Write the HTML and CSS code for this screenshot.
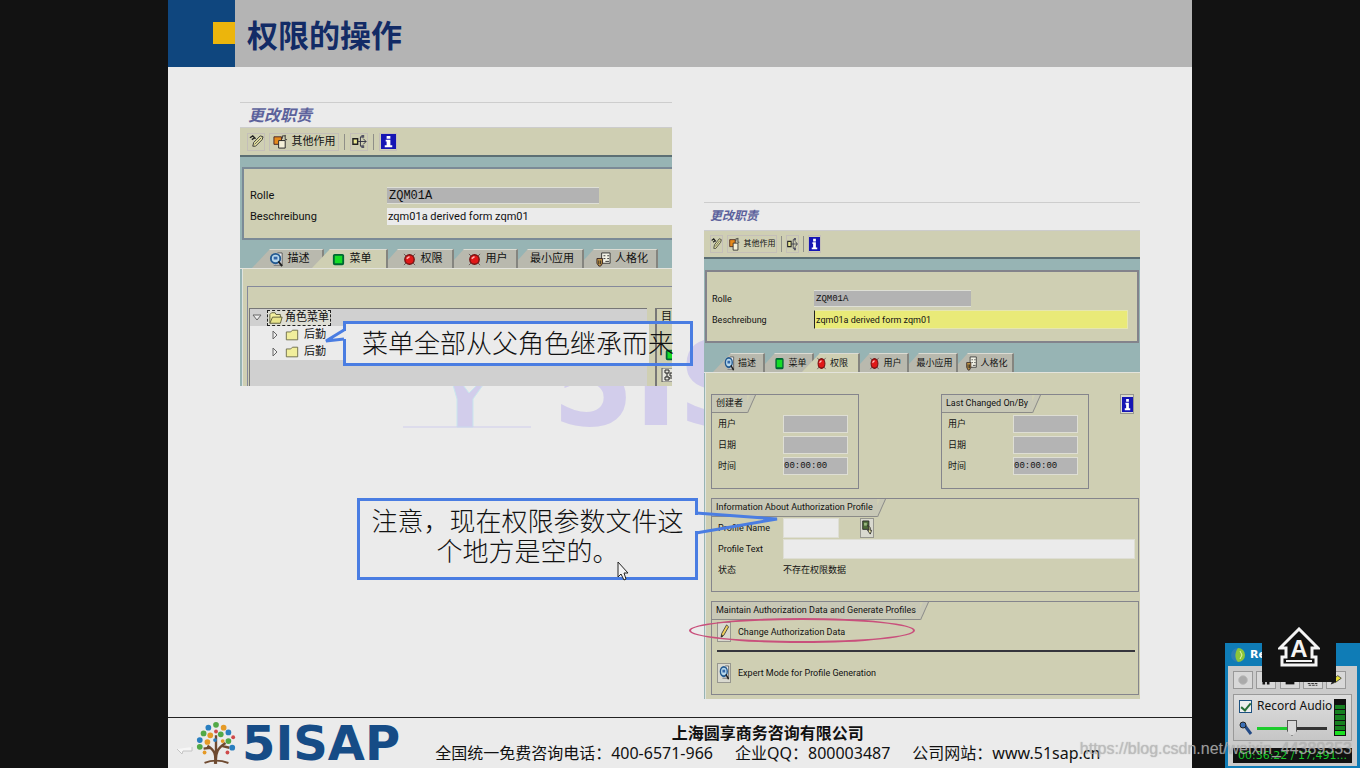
FILE: index.html
```html
<!DOCTYPE html>
<html lang="zh-CN">
<head>
<meta charset="utf-8">
<title>权限的操作</title>
<link rel="stylesheet" href="styles.css">
</head>
<body>
<svg class="symbols" aria-hidden="true">
  <symbol id="i-edit" viewBox="0 0 16 16" preserveAspectRatio="none"><path d="M1 4l3-2 3 3M3 6l3-2" fill="none" stroke="#222" stroke-width="1.5"/><path d="M4 13l1-4 7-7 3 1-1 3-7 7z" fill="#e9e6a0" stroke="#333"/><path d="M6 11l7-7" stroke="#555"/></symbol>
  <symbol id="i-other" viewBox="0 0 16 16" preserveAspectRatio="none"><path d="M1 3h8v8H1z" fill="#e58a1c" stroke="#422"/><path d="M6 7h7v8H6z" fill="#f4f0d8" stroke="#222"/><path d="M10 5V2h3M13 1v5h2" fill="none" stroke="#333"/></symbol>
  <symbol id="i-tree" viewBox="0 0 16 16" preserveAspectRatio="none"><path d="M1 5h5v6H1z" fill="#e8e690" stroke="#222" stroke-width="1.5"/><path d="M6 8h9M9 8V3h2M9 8v5h2M12 5l3 3-3 3" fill="none" stroke="#334"/><path d="M10 1h3v3h-3zM10 12h3v3h-3z" fill="#556"/></symbol>
  <symbol id="i-info" viewBox="0 0 16 16" preserveAspectRatio="none"><path d="M0 0h16v16H0z" fill="#1515b4"/><path d="M6 2h4v3H6zM5 6h5v6h2v2H4v-2h2V8H5z" fill="#fff"/></symbol>
  <symbol id="i-search" viewBox="0 0 16 16" preserveAspectRatio="none"><path d="M9 1h5v13H5" fill="#eee" stroke="#555"/><circle cx="7" cy="7" r="5" fill="#b8d8ec" stroke="#235a91" stroke-width="2"/><path d="M5 5h4v3H5z" fill="#3567a8"/><path d="M10 10l4 5" stroke="#222" stroke-width="2"/></symbol>
  <symbol id="i-green" viewBox="0 0 16 16" preserveAspectRatio="none"><rect x="3" y="3" width="10" height="10" rx="1" fill="#16dc28" stroke="#063" stroke-width="2"/></symbol>
  <symbol id="i-red" viewBox="0 0 16 16" preserveAspectRatio="none"><path d="M2 2l12 12M14 2L2 14" stroke="#655"/><circle cx="8" cy="8" r="5" fill="#e01818" stroke="#711" stroke-width="1.5"/><path d="M5 7l3-2" stroke="#fbb" stroke-width="1.5"/></symbol>
  <symbol id="i-person" viewBox="0 0 16 16" preserveAspectRatio="none"><path d="M6 1h9v11H6z" fill="#f2f2e6" stroke="#333"/><path d="M8 4h2M12 4h2M8 7h2M12 7h2M10 10h4" stroke="#333"/><path d="M1 7h6v5l-2 3H3l-2-3z" fill="#c79a48" stroke="#322"/><path d="M3 9v4M5 9v4" stroke="#222"/></symbol>
  <symbol id="i-open" viewBox="0 0 16 16"><path d="M1 14V4l2-2h4l1 2h5v3" fill="#f4f1a0" stroke="#553"/><path d="M1 14l3-7h11l-2 7z" fill="#e9e58b" stroke="#553"/></symbol>
  <symbol id="i-folder" viewBox="0 0 16 16"><path d="M1.500 4.500h5l2-2h6v11h-13z" fill="#f1ee9c" stroke="#664"/></symbol>
  <symbol id="i-pencil" viewBox="0 0 16 16" preserveAspectRatio="none"><path d="M3 14l1-4 7-9 3 2-7 9z" fill="#f2cf5b" stroke="#333"/><path d="M3 14l1-3 2 2z" fill="#222"/></symbol>
  <symbol id="i-copy" viewBox="0 0 16 16" preserveAspectRatio="none"><path d="M1 1h9v9H1z" fill="#4d6b38" stroke="#222"/><path d="M3 3h4v3H3z" fill="#9bb883"/><path d="M8 6l4 2v3h2l-2 4-4-4h2V9z" fill="#e8e3a0" stroke="#222"/></symbol>
</svg>

<main class="slide">
  <header class="slide-head"><span class="brand-block"><i></i></span><h1>权限的操作</h1></header>
  <div class="ghost" aria-hidden="true">5IS</div>
  <svg class="ghost-tree" viewBox="0 0 130 46" aria-hidden="true"><path d="M50 0h10l6 8 8-8h6L70 14v28H54V14z" fill="#d2cdeb" stroke="#c9e6ed"/><path d="M0 42h128" stroke="#cfcdec"/></svg>

  <div class="stage">
    <section class="sap sap-a">
      <h2>更改职责</h2>
      <div class="toolbar">
        <button aria-label="编辑"><svg><use href="#i-edit"/></svg></button>
        <button class="wide"><svg><use href="#i-other"/></svg>其他作用</button>
        <span class="sep"></span>
        <button aria-label="层次"><svg><use href="#i-tree"/></svg></button>
        <span class="sep"></span>
        <button aria-label="信息"><svg><use href="#i-info"/></svg></button>
      </div>
      <div class="head-box">
        <div class="field"><label for="a1">Rolle</label><input id="a1" class="role mono" value="ZQM01A" readonly></div>
        <div class="field"><label for="a2">Beschreibung</label><input id="a2" class="desc" value="zqm01a derived form zqm01"></div>
      </div>
      <div class="tabs">
        <button><svg><use href="#i-search"/></svg>描述</button>
        <button class="active"><svg><use href="#i-green"/></svg>菜单</button>
        <button><svg><use href="#i-red"/></svg>权限</button>
        <button><svg><use href="#i-red"/></svg>用户</button>
        <button>最小应用</button>
        <button><svg><use href="#i-person"/></svg>人格化</button>
      </div>
      <div class="tab-body">
        <div class="menu-box">
          <ul class="tree">
            <li><svg class="arrow" viewBox="0 0 10 10"><path d="M1 2h8L5 7z" fill="#eee" stroke="#666"/></svg><span class="root"><svg><use href="#i-open"/></svg>角色菜单</span></li>
            <li class="sub"><svg class="arrow" viewBox="0 0 10 10"><path d="M3 1v8l4-4z" fill="#eee" stroke="#666"/></svg><svg><use href="#i-folder"/></svg>后勤</li>
            <li class="sub"><svg class="arrow" viewBox="0 0 10 10"><path d="M3 1v8l4-4z" fill="#eee" stroke="#666"/></svg><svg><use href="#i-folder"/></svg>后勤</li>
          </ul>
          <div class="side">
            <span>目</span>
            <svg><use href="#i-green"/></svg>
            <svg class="net" viewBox="0 0 14 14"><path d="M1 0h13v14H1z" fill="#e6e6de" stroke="#555"/><path d="M4 2h4v3H4zM9 5h4v3H9zM4 9h4v3H4zM6 5v4M8 10h4" fill="none" stroke="#222"/></svg>
          </div>
        </div>
      </div>
    </section>

    <section class="sap sap-b">
      <h2>更改职责</h2>
      <div class="toolbar">
        <button aria-label="编辑"><svg><use href="#i-edit"/></svg></button>
        <button class="wide"><svg><use href="#i-other"/></svg>其他作用</button>
        <span class="sep"></span>
        <button aria-label="层次"><svg><use href="#i-tree"/></svg></button>
        <span class="sep"></span>
        <button aria-label="信息"><svg><use href="#i-info"/></svg></button>
      </div>
      <div class="head-box">
        <div class="field"><label for="b1">Rolle</label><input id="b1" class="role mono" value="ZQM01A" readonly></div>
        <div class="field"><label for="b2">Beschreibung</label><input id="b2" class="desc" value="zqm01a derived form zqm01"></div>
      </div>
      <div class="tabs">
        <button><svg><use href="#i-search"/></svg>描述</button>
        <button><svg><use href="#i-green"/></svg>菜单</button>
        <button class="active"><svg><use href="#i-red"/></svg>权限</button>
        <button><svg><use href="#i-red"/></svg>用户</button>
        <button>最小应用</button>
        <button><svg><use href="#i-person"/></svg>人格化</button>
      </div>
      <div class="tab-body">
        <div class="meta">
          <div class="group">
            <h3>创建者</h3>
            <div class="field"><label for="c1">用户</label><input id="c1" readonly></div>
            <div class="field"><label for="c2">日期</label><input id="c2" readonly></div>
            <div class="field"><label for="c3">时间</label><input id="c3" class="mono" value="00:00:00" readonly></div>
          </div>
          <div class="group">
            <h3>Last Changed On/By</h3>
            <div class="field"><label for="d1">用户</label><input id="d1" readonly></div>
            <div class="field"><label for="d2">日期</label><input id="d2" readonly></div>
            <div class="field"><label for="d3">时间</label><input id="d3" class="mono" value="00:00:00" readonly></div>
          </div>
          <button class="sq" aria-label="信息"><svg><use href="#i-info"/></svg></button>
        </div>
        <div class="group profile">
          <h3>Information About Authorization Profile</h3>
          <div class="field"><label for="p1">Profile Name</label><input id="p1" class="name"><button class="sq" aria-label="复制"><svg><use href="#i-copy"/></svg></button></div>
          <div class="field"><label for="p2">Profile Text</label><input id="p2" class="text"></div>
          <div class="field"><span class="lbl">状态</span><span>不存在权限数据</span></div>
        </div>
        <div class="group maintain">
          <h3>Maintain Authorization Data and Generate Profiles</h3>
          <button class="action"><span class="sq"><svg><use href="#i-pencil"/></svg></span>Change Authorization Data</button>
          <hr>
          <button class="action"><span class="sq"><svg><use href="#i-search"/></svg></span>Expert Mode for Profile Generation</button>
          <span class="ring"></span>
        </div>
      </div>
    </section>
  </div>

  <div class="callout one">菜单全部从父角色继承而来
    <svg viewBox="0 0 22 14"><path d="M22 2h-2v8h2z" fill="#ebebeb"/><path d="M20 1L2 12L20 10" fill="#ebebeb" stroke="#4a7de2" stroke-width="3"/></svg>
  </div>
  <div class="callout two">注意，现在权限参数文件这<br>个地方是空的。
    <svg viewBox="0 0 86 26"><path d="M0 5h4v16H0z" fill="#ebebeb"/><path d="M1 3L82 9L1 23" fill="none" stroke="#4a7de2" stroke-width="3"/></svg>
  </div>
  <svg class="cursor" viewBox="0 0 12 20"><path d="M1 1v15l3-3 3 6 2-1-2-6h4z" fill="#f4f4f4" stroke="#222"/></svg>

  <footer>
    <div class="logo">
      <svg viewBox="0 0 44 46" aria-hidden="true">
        <path d="M21 45c1-10 0-14-8-19M22 45c-1-12 2-17 10-22M22 36V15M16 28l-7 1M28 26l8 2" fill="none" stroke="#6e4a30" stroke-width="2.500"/>
        <path d="M10 44c7-3 17-3 25 0" fill="none" stroke="#6e4a30" stroke-width="2"/>
        <g fill="#52a946"><circle cx="22" cy="4" r="3"/><circle cx="9" cy="13" r="3"/><circle cx="35" cy="21" r="3"/><circle cx="5" cy="27" r="3"/><circle cx="27" cy="14" r="3"/></g>
        <g fill="#2a7fc0"><circle cx="14" cy="7" r="3"/><circle cx="35" cy="12" r="3"/><circle cx="5" cy="20" r="3"/><circle cx="39" cy="28" r="3"/><circle cx="21" cy="20" r="2"/></g>
        <g fill="#e59a26"><circle cx="30" cy="7" r="3"/><circle cx="16" cy="15" r="3"/><circle cx="13" cy="22" r="3"/><circle cx="29" cy="21" r="2"/><circle cx="10" cy="33" r="2"/></g>
        <g fill="#cf4a4a"><circle cx="22" cy="11" r="2"/><circle cx="40" cy="17" r="2"/><circle cx="34" cy="33" r="2"/></g>
      </svg>
      <b>5ISAP</b>
    </div>
    <div class="contact">
      <strong>上海圆享商务咨询有限公司</strong>
      <p><span>全国统一免费咨询电话：400-6571-966</span><span>企业QQ：800003487</span><span>公司网站：www.51sap.cn</span></p>
    </div>
    <svg class="prev" viewBox="0 0 18 12" aria-hidden="true"><path d="M1 5l5 5 1-3h9V3" fill="#f6f6f6" stroke="#c4c4c4"/></svg>
  </footer>
</main>

<aside class="recorder">
  <div class="rec-title"><svg viewBox="0 0 16 16"><circle cx="8" cy="8" r="7" fill="#2e7fb4"/><path d="M8 1a7 7 0 0 1 0 14c-4-4-3-10 0-14z" fill="#8cc63a"/><path d="M10 4l2 4-2 4" fill="none" stroke="#e7f7b0"/></svg>Re</div>
  <div class="rec-body">
    <div class="rec-btns">
      <button aria-label="Record"><svg viewBox="0 0 16 16"><circle cx="8" cy="8" r="5" fill="#aaa" stroke="#bbb"/></svg></button>
      <button aria-label="Pause"><svg viewBox="0 0 16 16"><path d="M4 3h3v10H4zM9 3h3v10H9z" fill="#111"/></svg></button>
      <button aria-label="Stop"><svg viewBox="0 0 16 16"><path d="M3 3h10v10H3z" fill="#111"/></svg></button>
      <button aria-label="Keys"><svg viewBox="0 0 16 16"><path d="M2 9h12M2 12h12M3 14h10" stroke="#222" stroke-dasharray="3 1"/></svg></button>
      <button aria-label="Draw"><svg viewBox="0 0 16 16"><path d="M2 13l2-5 3 3z" fill="#222"/><path d="M4 8l6-5 4 3-7 5z" fill="#e6df35" stroke="#443"/></svg></button>
    </div>
    <div class="audio">
      <div class="audio-main">
        <label><input type="checkbox" checked>Record Audio</label>
        <div class="vol"><svg viewBox="0 0 14 14"><path d="M6 5l6 8" stroke="#234a86" stroke-width="3"/><circle cx="4" cy="4" r="3" fill="#3b6fb5" stroke="#222"/></svg><input type="range" aria-label="Volume" value="50"></div>
      </div>
      <div class="meter"><i></i><i></i><i></i><i></i><i></i><i></i><i></i></div>
    </div>
    <div class="time">00:36:22 / 17,491...</div>
  </div>
  <div class="ime"><svg viewBox="0 0 42 40"><path d="M21 2L2 21h6v9H4v8h34v-8h-4v-9h6z" fill="#121212" stroke="#f4f4f4" stroke-width="3"/><path d="M8 34h26" stroke="#f4f4f4" stroke-width="2"/></svg><b>A</b></div>
</aside>
<div class="watermark">https://blog.csdn.net/weixin_44389353</div>
</body>
</html>
```
FILE: styles.css
```css
* { box-sizing: border-box; }
body {
  margin: 0;
  background: #121212;
  color: #111;
  font-family: "Noto Sans", "Noto Sans CJK SC", sans-serif;
  position: relative;
  min-height: 100vh;
  overflow-x: hidden;
}
.symbols { position: absolute; width: 0; height: 0; }
button, input { font: inherit; color: inherit; margin: 0; padding: 0; border: 0; border-radius: 0; background: none; min-width: 0; outline: 0; }
h1, h2, h3, p, ul { margin: 0; padding: 0; }
svg { display: block; flex: none; }

.slide {
  position: relative;
  max-width: 1024px;
  min-height: 100vh;
  margin: 0 auto;
  background: #ebebeb;
  display: flex;
  flex-direction: column;
}
.slide-head { display: flex; align-items: center; height: 67px; background: #b4b4b4; }
.brand-block { width: 67px; height: 67px; background: #0f467e; display: flex; justify-content: flex-end; padding-top: 22px; }
.brand-block i { width: 22px; height: 22px; background: #ecb50c; }
h1 { margin-left: 12px; font: 700 31px/44px "Noto Sans CJK SC", sans-serif; color: #122b66; }

.ghost { position: absolute; left: 384px; top: 314px; font: 700 118px/140px "DejaVu Sans", sans-serif; color: #d2cdeb; }
.ghost-tree { position: absolute; left: 235px; top: 385px; width: 130px; }

.stage { position: relative; flex: 1; display: flex; align-items: flex-start; gap: 32px; padding: 35px 52px 16px 72px; }

/* SAP windows */
.sap {
  --tan: #cfcfb3;
  flex: 436 1 0;
  min-width: 0;
  overflow: hidden;
  background: #97b4b4;
  border-top: 1px solid #cdcdcd;
  font-family: Roboto, "Noto Sans CJK SC", sans-serif;
  font-size: 11px;
  line-height: 16px;
}
.sap-a { flex-grow: 432; }
.sap-b { margin-top: 100px; font-size: 9px; overflow: visible; }
.sap h2 { height: 25px; padding-left: 8px; background: #ebebeb; border-bottom: 1px solid #ccc; color: #5c629c; font: italic 700 16px/22px "Noto Sans CJK SC", sans-serif; }
.sap-b h2 { height: 28px; font-size: 12px; line-height: 24px; padding-left: 6px; }
.toolbar { display: flex; align-items: center; gap: 4px; height: 29px; padding-left: 7px; background: var(--tan); border-bottom: 2px solid #5c6f74; }
.toolbar button { display: flex; align-items: center; justify-content: center; width: 18px; height: 18px; border: 1px solid #c4bfb8; }
.toolbar svg { width: 15px; height: 15px; }
.toolbar .wide { width: 70px; gap: 4px; }
.sep { width: 1px; height: 16px; margin: 0 1px; background: #8f8f88; }
.sap-b .toolbar { height: 28px; padding-left: 6px; gap: 4px; }
.sap-b .toolbar button { width: 13px; }
.sap-b .toolbar .wide { width: 50px; font-size: 8px; gap: 4px; }
.sap-b .toolbar svg { width: 11px; height: 14px; }
.sap-b .sep { margin: 0; }

.head-box { margin: 10px 0 0 2px; padding: 16px 0 11px 6px; background: var(--tan); border: solid #7b8a96; border-width: 2px 0 2px 2px; }
.field { display: flex; align-items: center; height: 21px; }
.head-box label { width: 137px; }
.head-box input { height: 17px; padding-left: 2px; background: #b3b3b3; border: solid #dedfd6; border-width: 1px 0; }
.head-box .role { width: 212px; }
.head-box .desc { flex: 1; padding-left: 1px; background: #ebebeb; border: 0; }
.mono { font-family: "Liberation Mono", monospace; font-size: 12px; }
.sap-b .head-box { margin: 11px 1px 0; padding: 16px 9px 11px 5px; border-width: 2px; border-color: #83838b; }
.sap-b .head-box label { width: 102px; }
.sap-b .head-box .role { width: 157px; }
.sap-b .head-box .desc { background: #e9ea78; border: 1px solid #e6e6b0; border-left-color: #222; height: 19px; }
.sap-b .mono { font-size: 9px; }

.tabs { display: grid; grid-template-columns: 72px 64px 66px 64px 66px 74px; margin-top: 9px; padding-left: 12px; border-bottom: 1px solid #e4e4dc; }
.tabs button { display: flex; align-items: center; justify-content: center; gap: 4px; height: 19px; padding-left: 4px; background: #b9b9ae; border-top: 1px solid #dcdcd4; border-right: 2px solid #85857f; clip-path: polygon(10px 0, 100% 0, 100% 100%, 0 100%, 0 11px); white-space: nowrap; }
.tabs button:first-child { clip-path: polygon(18px 0, 100% 0, 100% 100%, 0 100%); }
.tabs .active { background: var(--tan); margin-left: -12px; clip-path: polygon(18px 0, 100% 0, 100% 100%, 0 100%); }
.tabs svg { width: 15px; height: 15px; }
.sap-b .tabs { grid-template-columns: 52px 49px 46px 49px 49px 56px; padding-left: 9px; margin-top: 10px; }
.sap-b .tabs button { gap: 3px; padding-left: 4px; }
.sap-b .tabs svg { width: 11px; }

.sap-a .tab-body { margin-left: 2px; padding: 17px 0 0 4px; background: var(--tan); border-left: 1px solid #dfe4df; }
.menu-box { display: flex; gap: 8px; height: 100px; padding: 21px 0 0 1px; border: solid #85899b; border-width: 1px 0 0 1px; overflow: hidden; }
.tree { flex: 1; list-style: none; background: #d0d0d0; border: solid #777; border-width: 1px 0 0 1px; }
.tree li { display: flex; align-items: center; gap: 5px; height: 17px; padding-left: 2px; }
.tree .arrow { width: 10px; height: 10px; }
.tree svg { width: 14px; height: 14px; }
.tree .sub { width: 96px; padding-left: 20px; background: #ebebeb; }
.root { display: flex; align-items: center; gap: 2px; height: 16px; padding: 0 1px; border: 1px dashed #222; background: #deded4; }
.side { width: 17px; padding-left: 4px; border: solid #777; border-width: 1px 0 0 2px; overflow: hidden; }
.side svg { width: 14px; height: 14px; margin: 24px 0 4px 3px; }
.side .net { margin: 6px 0 0; }
.side span { display: block; height: 15px; line-height: 15px; }

.sap-b .tab-body { margin-left: 1px; padding: 21px 1px 4px 5px; background: var(--tan); border-left: 1px solid #dfe4df; }
.meta { display: flex; justify-content: space-between; padding-right: 5px; margin-bottom: 9px; }
.meta .group { width: 148px; height: 95px; }
.meta .group:first-child { margin-right: 82px; }
.meta > .sq { margin-left: auto; }
.group { position: relative; z-index: 0; height: 94px; border: 1px solid #85858c; padding-left: 5px; }
.group h3 { position: relative; display: inline-block; vertical-align: top; height: 18px; margin-left: -5px; padding: 0 4px; border-bottom: 1px solid #8b8b88; background: #c8c8b6; font-size: 9px; line-height: 16px; font-weight: 400; white-space: nowrap; }
.group h3::after { content: ""; position: absolute; left: 100%; top: 0; width: 5px; height: 18px; margin-left: -5px; border-right: 1px solid #8b8b88; background: #c8c8b6; transform: skewX(-24deg); transform-origin: 0 100%; z-index: -1; }
.group .field label, .lbl { width: 66px; padding-left: 1px; }
.group .field input { height: 18px; background: #b4b4b4; border: 1px solid #deded4; }
.meta .field input { width: 65px; }
.sq { display: flex; align-items: center; justify-content: center; width: 14px; height: 20px; background: #d9d9cf; border: 1px solid #97978f; }
.sq svg { width: 11px; height: 15px; }
.profile { margin-bottom: 9px; }
.group .field .name { width: 56px; margin-right: 21px; background: #ebebeb; height: 20px; }
.group .field .text { flex: 1; margin-right: 3px; background: #ebebeb; height: 20px; }
.action { display: flex; align-items: center; gap: 7px; height: 23px; }
.maintain hr { margin: 7px 3px 9px 0; border: 0; height: 2px; background: #35353c; }
.ring { position: absolute; left: -23px; top: 16px; width: 226px; height: 25px; border: 2px solid #c9507c; border-radius: 50%; }

/* Callouts */
.callout { position: absolute; border: 3px solid #4a7de2; font: 300 26px/30px "Noto Sans CJK SC", sans-serif; white-space: nowrap; }
.callout svg { position: absolute; }
.one { left: 175px; top: 321px; width: 350px; padding: 3px 0 6px 16px; background: linear-gradient(90deg, #ebebeb 88%, transparent 88%); }
.one svg { width: 22px; left: -22px; top: 5px; }
.two { left: 189px; top: 498px; width: 341px; padding: 4px 0 12px; text-align: center; background: #ebebeb; }
.two svg { width: 86px; left: 335px; top: 9px; }
.cursor { position: absolute; left: 449px; top: 561px; width: 12px; }

footer { position: relative; display: flex; align-items: center; height: 51px; padding-left: 27px; background: #ebebeb; border-top: 1px solid #222; }
.logo { display: flex; align-items: center; gap: 5px; }
.logo svg { width: 42px; }
.logo b { font: 700 48px/50px "DejaVu Sans", sans-serif; color: #164c86; }
.contact { margin-left: 35px; font-size: 16px; line-height: 20px; white-space: nowrap; text-align: center; }
.contact strong { display: block; line-height: 19px; }
.contact p { display: flex; gap: 22px; }
.prev { position: absolute; left: 8px; bottom: 12px; width: 18px; }

/* Recorder */
.recorder { position: absolute; right: 0; bottom: 0; width: 135px; padding: 0 3px 2px; background: #0f7cb6; font-family: "DejaVu Sans", sans-serif; }
.rec-title { display: flex; align-items: center; gap: 4px; height: 23px; padding-left: 2px; color: #fff; font: 700 11px/20px "DejaVu Sans", sans-serif; }
.rec-title svg { width: 16px; }
.rec-body { padding: 5px 5px 3px; background: #cbcbcb; }
.rec-btns { display: flex; justify-content: space-between; padding-right: 6px; }
.rec-btns button { width: 20px; height: 18px; border: 1px solid #999; background: #d8d8d8; display: grid; place-items: center; }
.rec-btns svg { width: 14px; height: 14px; }
.audio { display: flex; margin: 5px 0 7px; height: 47px; padding: 4px 5px; border: 1px solid #999; background: linear-gradient(#ddd, #c6c6c6); }
.audio-main { flex: 1; font-family: "Noto Sans", sans-serif; font-size: 12px; line-height: 14px; white-space: nowrap; }
.audio label { display: flex; align-items: center; gap: 5px; }
.audio [type=checkbox] { appearance: none; width: 13px; height: 13px; background: #eee; border: 1px solid #1c5180; display: grid; place-items: center; }
.audio [type=checkbox]:checked::before { content: ""; width: 4px; height: 8px; border: solid #286e38; border-width: 0 2px 2px 0; transform: rotate(40deg); }
.vol { display: flex; align-items: center; gap: 4px; margin-top: 7px; }
.vol svg { width: 14px; }
.vol input { appearance: none; width: 70px; height: 16px; background: linear-gradient(90deg, #1ccb2c 50%, #333 50%) center / 100% 3px no-repeat; }
.vol input::-webkit-slider-thumb { appearance: none; width: 10px; height: 16px; background: #d8d8d8; border: 1px solid #555; clip-path: polygon(0 0, 100% 0, 100% 70%, 50% 100%, 0 70%); }
.meter { width: 12px; display: flex; flex-direction: column; gap: 1px; padding: 1px; background: #111; }
.meter i { flex: 1; background: #168020; }
.meter i:first-child { background: #111; }
.meter i:last-child { background: #1ce022; }
.time { height: 15px; background: #111; color: #18c828; font: 11px/15px "DejaVu Sans", sans-serif; text-align: center; white-space: nowrap; overflow: hidden; }
.ime { position: absolute; left: 37px; top: -23px; width: 74px; height: 62px; padding-top: 7px; background: #121212; display: grid; justify-items: center; align-items: start; }
.ime svg, .ime b { grid-area: 1 / 1; }
.ime svg { width: 42px; }
.ime b { position: relative; padding-top: 10px; color: #f4f4f4; font: 700 24px/24px "Liberation Sans", sans-serif; }
.watermark { position: absolute; right: 8px; bottom: 9px; font: 16px/20px "Liberation Sans", sans-serif; color: rgba(190, 190, 190, .75); text-shadow: 0 0 1px rgba(110, 110, 110, .5); }
```
